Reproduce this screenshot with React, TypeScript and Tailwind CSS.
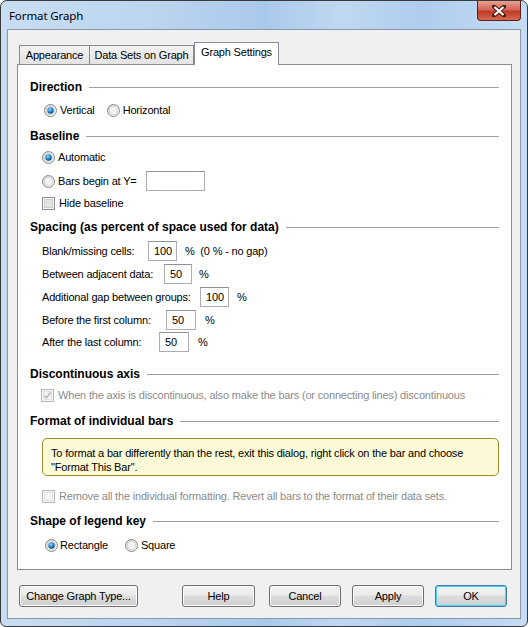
import React from 'react';

function Radio({ checked }: { checked?: boolean }) {
  return (
    <svg width="13" height="13" viewBox="0 0 13 13" className="shrink-0">
      <defs>
        <linearGradient id="rg" x1="0" y1="0" x2="1" y2="1">
          <stop offset="0" stopColor="#d2d2d2" />
          <stop offset="1" stopColor="#ffffff" />
        </linearGradient>
        <radialGradient id="rd" cx="0.4" cy="0.35" r="0.7">
          <stop offset="0" stopColor="#9fd8f7" />
          <stop offset="0.5" stopColor="#2a8ad4" />
          <stop offset="1" stopColor="#0b3f7a" />
        </radialGradient>
      </defs>
      <circle cx="6.5" cy="6.5" r="6" fill="url(#rg)" stroke="#8a8b8b" />
      <circle cx="6.5" cy="6.5" r="4.2" fill="#f2f2f2" stroke="#c4c4c4" strokeWidth="0.6" />
      {checked && <circle cx="6.5" cy="6.5" r="3.2" fill="url(#rd)" />}
    </svg>
  );
}

function Check({ disabled, checked }: { disabled?: boolean; checked?: boolean }) {
  return (
    <svg width="13" height="13" viewBox="0 0 13 13" className="shrink-0">
      <rect x="0.5" y="0.5" width="12" height="12" fill="#f6f6f6" stroke={disabled ? '#b8b8b8' : '#8e8f8f'} />
      <rect x="2.5" y="2.5" width="8" height="8" fill={disabled ? '#f4f4f4' : '#e2e2e2'} stroke={disabled ? '#e0e0e0' : '#cfcfcf'} />
      {checked && (
        <path d="M3.5 6.5 L5.5 8.8 L9.6 3.6" fill="none" stroke="#b9b9b9" strokeWidth="1.6" />
      )}
    </svg>
  );
}

function Heading({ children }: { children: React.ReactNode }) {
  return (
    <div className="flex h-[22px] items-center">
      <span className="text-[12px] font-bold tracking-normal text-black">{children}</span>
      <div className="ml-[7px] h-px flex-1 bg-[#a0a0a0]" />
    </div>
  );
}

function Box({ value, w }: { value: string; w: string }) {
  return (
    <div className={`flex h-[20px] items-center border border-[#abadb3] border-t-[#8f9196] bg-white pl-[5px] ${w}`}>
      {value}
    </div>
  );
}

function Button({ children, def, w }: { children: React.ReactNode; def?: boolean; w: string }) {
  return (
    <div
      className={`flex h-[22px] items-center justify-center rounded-[3px] border bg-[linear-gradient(#f3f3f3_0%,#ebebeb_45%,#dddddd_50%,#cfcfcf_100%)] ${w} ${
        def ? 'border-[#3c7fb1] shadow-[inset_0_0_0_1px_#48d1f4]' : 'border-[#707070] shadow-[inset_0_0_0_1px_#fcfcfc]'
      }`}
    >
      {children}
    </div>
  );
}

export default function App() {
  return (
    <div className="h-[627px] w-[528px] overflow-hidden bg-white">
      <div className="flex h-[627px] w-[528px] flex-col rounded-t-[7px] rounded-b-[6px] border border-[#3a3a3a] bg-[linear-gradient(90deg,#c7ddf4_0%,#bcd4ef_30%,#a9c9ec_50%,#c0d8f2_65%,#aecdee_80%,#c6dcf4_100%)] font-['Liberation_Sans',Arial,sans-serif] text-[11px] tracking-[-0.18px] text-black">
        {/* title bar */}
        <div className="flex h-[28px] shrink-0 items-start">
          <span className="ml-[8px] mt-[7px] font-['Noto_Sans',sans-serif] text-[11.5px] leading-[16px] tracking-[-0.1px] text-black">
            Format Graph
          </span>
          <div className="ml-auto mr-[6px] flex h-[20px] w-[44px] items-center justify-center rounded-b-[4px] border border-t-0 border-[#5a2020] bg-[linear-gradient(#e8a093_0%,#d2685a_45%,#c13a25_55%,#d46a4e_100%)]">
            <svg width="14" height="12" viewBox="0 0 14 12">
              <path d="M2 1.5 L12 10.5 M12 1.5 L2 10.5" stroke="#4a1a14" strokeWidth="4" strokeLinecap="square" />
              <path d="M2.5 2 L11.5 10 M11.5 2 L2.5 10" stroke="#ffffff" strokeWidth="2.2" />
            </svg>
          </div>
        </div>

        {/* client area */}
        <div className="mx-[6px] flex flex-1 flex-col border border-[#8a97a6] bg-[#f0f0f0]">
          {/* tabs */}
          <div className="ml-[11px] mt-[12px] flex h-[22px] items-end">
            <div className="flex h-[19px] w-[71px] items-center justify-center border border-b-0 border-[#898c95] bg-[linear-gradient(#f2f2f2,#e3e3e3)]">
              Appearance
            </div>
            <div className="flex h-[19px] w-[104px] items-center justify-center border border-b-0 border-l-0 border-[#898c95] bg-[linear-gradient(#f2f2f2,#e3e3e3)]">
              Data Sets on Graph
            </div>
            <div className="relative z-10 -mb-px flex h-[23px] w-[85px] items-center justify-center border border-b-0 border-[#898c95] bg-white pb-[3px]">
              Graph Settings
            </div>
          </div>

          {/* page */}
          <div className="ml-[9px] mr-[8px] h-[506px] border border-[#898c95] bg-white pl-[12px] pr-[12px] pt-[11px]">
            <Heading>Direction</Heading>
            <div className="mt-[1px] flex h-[22px] items-center pl-[14px]">
              <Radio checked />
              <span className="ml-[3px]">Vertical</span>
              <span className="ml-[12px]">
                <Radio />
              </span>
              <span className="ml-[3px]">Horizontal</span>
            </div>

            <div className="mt-[4px]">
              <Heading>Baseline</Heading>
            </div>
            <div className="-mt-px flex h-[22px] items-center pl-[12px]">
              <Radio checked />
              <span className="ml-[3px]">Automatic</span>
            </div>
            <div className="mt-[2px] flex h-[22px] items-center pl-[12px]">
              <Radio />
              <span className="ml-[3px]">Bars begin at Y=</span>
              <div className="ml-[9px]">
                <Box value="" w="w-[59px]" />
              </div>
            </div>
            <div className="flex h-[22px] items-center pl-[12px]">
              <Check />
              <span className="ml-[4px]">Hide baseline</span>
            </div>

            <div className="mt-[2px]">
              <Heading>Spacing (as percent of space used for data)</Heading>
            </div>
            <div className="mt-[2px] flex h-[22px] items-center pl-[12px]">
              <span className="w-[106px]">Blank/missing cells:</span>
              <Box value="100" w="w-[29px]" />
              <span className="ml-[8px]">%&nbsp;&nbsp;(0 % - no gap)</span>
            </div>
            <div className="mt-[1px] flex h-[22px] items-center pl-[12px]">
              <span className="w-[122px]">Between adjacent data:</span>
              <Box value="50" w="w-[28px]" />
              <span className="ml-[7px]">%</span>
            </div>
            <div className="mt-[1px] flex h-[22px] items-center pl-[12px]">
              <span className="w-[158px]">Additional gap between groups:</span>
              <Box value="100" w="w-[29px]" />
              <span className="ml-[8px]">%</span>
            </div>
            <div className="mt-[1px] flex h-[22px] items-center pl-[12px]">
              <span className="w-[124px]">Before the first column:</span>
              <Box value="50" w="w-[30px]" />
              <span className="ml-[9px]">%</span>
            </div>
            <div className="flex h-[22px] items-center pl-[12px]">
              <span className="w-[117px]">After the last column:</span>
              <Box value="50" w="w-[30px]" />
              <span className="ml-[9px]">%</span>
            </div>

            <div className="mt-[10px]">
              <Heading>Discontinuous axis</Heading>
            </div>
            <div className="-mt-px flex h-[22px] items-center pl-[11px] text-[#8b8b8b]">
              <Check disabled checked />
              <span className="ml-[4px]">When the axis is discontinuous, also make the bars (or connecting lines) discontinuous</span>
            </div>

            <div className="mt-[4px]">
              <Heading>Format of individual bars</Heading>
            </div>
            <div className="ml-[12px] mt-[6px] h-[38px] rounded-[5px] border border-[#a08a2e] bg-[#fcfad6] pl-[8px] pt-[7px] leading-[14px]">
              To format a bar differently than the rest, exit this dialog, right click on the bar and choose
              <br />
              "Format This Bar".
            </div>
            <div className="mt-[9px] flex h-[22px] items-center pl-[12px] text-[#8b8b8b]">
              <Check disabled />
              <span className="ml-[4px]">Remove all the individual formatting. Revert all bars to the format of their data sets.</span>
            </div>

            <div className="mt-[3px]">
              <Heading>Shape of legend key</Heading>
            </div>
            <div className="mt-[2px] flex h-[22px] items-center pl-[15px]">
              <Radio checked />
              <span className="ml-[2px]">Rectangle</span>
              <span className="ml-[17px]">
                <Radio />
              </span>
              <span className="ml-[3px]">Square</span>
            </div>
          </div>

          {/* buttons */}
          <div className="ml-[11px] mt-[15px] flex items-center">
            <Button w="w-[119px]">Change Graph Type...</Button>
            <div className="ml-[44px]">
              <Button w="w-[73px]">Help</Button>
            </div>
            <div className="ml-[14px]">
              <Button w="w-[72px]">Cancel</Button>
            </div>
            <div className="ml-[11px]">
              <Button w="w-[72px]">Apply</Button>
            </div>
            <div className="ml-[11px]">
              <Button w="w-[72px]" def>
                OK
              </Button>
            </div>
          </div>
        </div>
        <div className="h-[7px] shrink-0" />
      </div>
    </div>
  );
}
